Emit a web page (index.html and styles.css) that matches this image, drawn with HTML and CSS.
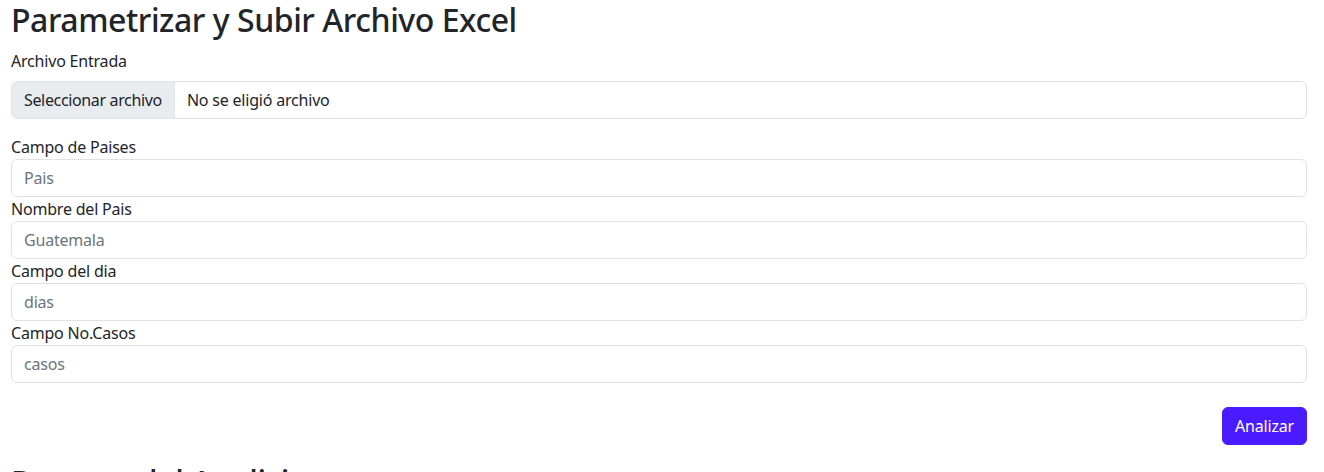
FILE: index.html
```html
<!DOCTYPE html>
<html lang="es">
<head>
<meta charset="utf-8">
<title>Parametrizar y Subir Archivo Excel</title>
<link rel="stylesheet" href="styles.css">
</head>
<body>
<main class="page">
  <h1 class="title">Parametrizar y Subir Archivo Excel</h1>
  <form class="form">
    <div class="group group-file">
      <label class="label">Archivo Entrada</label>
      <div class="file">
        <span class="file-btn">Seleccionar archivo</span>
        <span class="file-name">No se eligió archivo</span>
      </div>
    </div>
    <div class="group">
      <label class="label">Campo de Paises</label>
      <input class="input" type="text" placeholder="Pais">
    </div>
    <div class="group">
      <label class="label">Nombre del Pais</label>
      <input class="input" type="text" placeholder="Guatemala">
    </div>
    <div class="group">
      <label class="label">Campo del dia</label>
      <input class="input" type="text" placeholder="dias">
    </div>
    <div class="group">
      <label class="label">Campo No.Casos</label>
      <input class="input" type="text" placeholder="casos">
    </div>
    <div class="actions">
      <button type="button" class="btn">Analizar</button>
    </div>
  </form>
  <h2 class="subtitle">Reporte del Analisis</h2>
</main>
</body>
</html>
```
FILE: styles.css
```css
* { box-sizing: border-box; }
html, body { margin: 0; padding: 0; background: #fff; }
body {
  font-family: "Noto Sans", "DejaVu Sans", sans-serif;
  font-size: 16px;
  line-height: 1.5;
  letter-spacing: -0.2px;
  color: #212529;
  overflow: hidden;
}
.page {
  padding: 0 17px 0 11px;
}
.title {
  margin: 0 0 9px;
  font-size: 32px;
  font-weight: 500;
  line-height: 40px;
  letter-spacing: -0.45px;
}
.form { display: flex; flex-direction: column; }
.group { display: flex; flex-direction: column; }
.group-file { margin-bottom: 16px; }
.label { display: block; line-height: 24px; }
.group-file .label { margin-bottom: 8px; }
.file {
  display: flex;
  height: 38px;
  border: 1px solid #dee2e6;
  border-radius: 6px;
  overflow: hidden;
}
.file-btn {
  background: #e9ecef;
  border-right: 1px solid #dee2e6;
  padding: 6px 12px;
  white-space: nowrap;
  letter-spacing: -0.35px;
}
.file-name { padding: 6px 12px; white-space: nowrap; }
.input {
  font: inherit;
  letter-spacing: inherit;
  color: #212529;
  height: 38px;
  padding: 6px 12px;
  border: 1px solid #dee2e6;
  border-radius: 6px;
  background: #fff;
  width: 100%;
}
.input::placeholder { color: #6c757d; opacity: 1; }
.actions {
  display: flex;
  justify-content: flex-end;
  margin-top: 24px;
}
.btn {
  font: inherit;
  letter-spacing: inherit;
  color: #fff;
  background: #4b1bff;
  border: 1px solid #4b1bff;
  border-radius: 6px;
  height: 38px;
  padding: 6px 12px;
  width: 85px;
}
.subtitle {
  margin: 18px 0 0;
  font-size: 32px;
  font-weight: 500;
  line-height: 38px;
  letter-spacing: -0.45px;
}
```
